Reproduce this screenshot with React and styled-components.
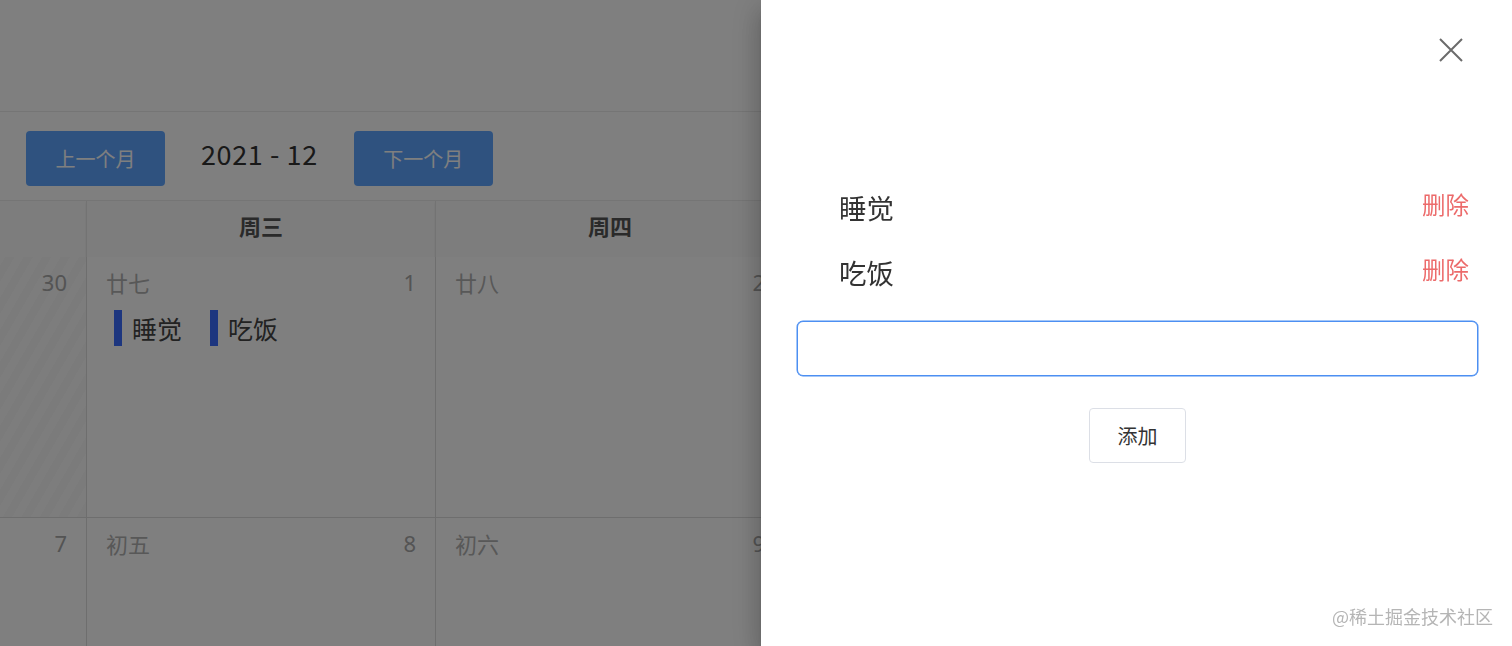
import React, { useState } from "react";
import styled, { createGlobalStyle } from "styled-components";

const GlobalStyle = createGlobalStyle`
  html, body {
    margin: 0;
    padding: 0;
    overflow: hidden;
    background: #ffffff;
    font-family: "Noto Sans CJK SC", "Noto Sans", sans-serif;
  }
  * { box-sizing: border-box; }
`;

const weekDays = ["周二", "周三", "周四"];
const rows = [
  [
    { day: 30, lunar: "廿六", other: true },
    { day: 1, lunar: "廿七", events: ["睡觉", "吃饭"] },
    { day: 2, lunar: "廿八" },
  ],
  [
    { day: 7, lunar: "初四" },
    { day: 8, lunar: "初五" },
    { day: 9, lunar: "初六" },
  ],
];

export default function App() {
  const [todos, setTodos] = useState(["睡觉", "吃饭"]);
  const [text, setText] = useState("");

  function addTodo() {
    if (!text.trim()) return;
    setTodos([...todos, text.trim()]);
    setText("");
  }

  return (
    <>
      <GlobalStyle />
      <Page>
        <TopBar />
        <Toolbar>
          <MonthButton>上一个月</MonthButton>
          <MonthLabel>2021 - 12</MonthLabel>
          <MonthButton>下一个月</MonthButton>
        </Toolbar>
        <Grid>
          {weekDays.map((w, i) => (
            <HeadCell key={w} first={i === 0}>
              {i === 0 ? "" : w}
            </HeadCell>
          ))}
          {rows.map((row, r) =>
            row.map((cell, i) => (
              <DayCell key={r + "-" + i} other={cell.other}>
                <DayTop>
                  {i === 0 ? <span /> : <Lunar>{cell.lunar}</Lunar>}
                  <DayNum>{cell.day}</DayNum>
                </DayTop>
                {i > 0 && cell.events && (
                  <Events>
                    {cell.events.map((e) => (
                      <Event key={e}>{e}</Event>
                    ))}
                  </Events>
                )}
              </DayCell>
            ))
          )}
        </Grid>
      </Page>

      <Mask />
      <Drawer>
        <DrawerHead>
          <CloseButton aria-label="close">
            <svg width="24" height="24" viewBox="0 0 24 24">
              <path d="M1 1 L23 23 M23 1 L1 23" stroke="#6b6b6b" strokeWidth="2" fill="none" />
            </svg>
          </CloseButton>
        </DrawerHead>
        <TodoList>
          {todos.map((t, i) => (
            <TodoItem key={i}>
              <TodoText>{t}</TodoText>
              <DeleteLink onClick={() => setTodos(todos.filter((_, j) => j !== i))}>删除</DeleteLink>
            </TodoItem>
          ))}
        </TodoList>
        <TodoInput value={text} onChange={(e) => setText(e.target.value)} />
        <AddRow>
          <AddButton onClick={addTodo}>添加</AddButton>
        </AddRow>
      </Drawer>
      <Watermark>@稀土掘金技术社区</Watermark>
    </>
  );
}

const Page = styled.div`
  width: 1512px;
  height: 646px;
  overflow: hidden;
  background: #ffffff;
`;

const TopBar = styled.div`
  height: 112px;
  border-bottom: 1px solid #ebebeb;
`;

const Toolbar = styled.div`
  height: 89px;
  display: flex;
  align-items: center;
  gap: 36px;
  padding: 5px 0 0 26px;
  border-bottom: 1px solid #ebebeb;
`;

const MonthButton = styled.button`
  width: 139px;
  height: 55px;
  border: none;
  border-radius: 4px;
  background: #5ea4ff;
  color: #ffffff;
  font-family: "Noto Sans CJK SC", sans-serif;
  font-size: 20px;
  padding-top: 1px;
`;

const MonthLabel = styled.div`
  font-family: "Noto Sans CJK SC", sans-serif;
  font-size: 27px;
  color: #333333;
  letter-spacing: 0.6px;
  margin-bottom: 10px;
`;

const Grid = styled.div`
  display: grid;
  grid-template-columns: 86px 349px 349px;
  grid-template-rows: 56px 261px 261px;
  width: 784px;
`;

const HeadCell = styled.div`
  display: flex;
  align-items: center;
  justify-content: center;
  padding-bottom: 9px;
  font-size: 22px;
  font-weight: 700;
  color: #555555;
  background: #fbfbfb;
  border-left: ${(p) => (p.first ? "none" : "1px solid #e6e6e6")};
  box-shadow: 0 2px 2px rgba(0, 0, 0, 0.08);
`;

const DayCell = styled.div`
  padding: 10px 19px 0 19px;
  border-left: 1px solid #dddddd;
  border-bottom: 1px solid #dddddd;
  &:nth-child(3n + 1) {
    border-left: none;
  }
  background: ${(p) =>
    p.other
      ? "repeating-linear-gradient(-60deg, #f6f6f6 0 8px, #fbfbfb 8px 16px)"
      : "#ffffff"};
`;

const DayTop = styled.div`
  display: flex;
  justify-content: space-between;
  align-items: center;
  height: 30px;
`;

const Lunar = styled.span`
  font-size: 22px;
  color: #b0b0b0;
`;

const DayNum = styled.span`
  font-size: 22px;
  color: #a8a8a8;
  font-family: "Noto Sans", sans-serif;
`;

const Events = styled.div`
  display: flex;
  gap: 28px;
  margin-top: 13px;
  padding-left: 8px;
`;

const Event = styled.div`
  height: 36px;
  display: flex;
  align-items: center;
  border-left: 8px solid #3a6cff;
  padding-left: 10px;
  font-size: 25px;
  color: #444444;
`;

const Mask = styled.div`
  position: fixed;
  inset: 0;
  background: rgba(0, 0, 0, 0.5);
`;

const Drawer = styled.aside`
  position: fixed;
  top: 0;
  right: 0;
  bottom: 0;
  width: 751px;
  background: #ffffff;
  padding: 0 34px 0 36px;
  display: flex;
  flex-direction: column;
  box-shadow: 0 8px 10px -5px rgba(0, 0, 0, 0.2), 0 16px 24px 2px rgba(0, 0, 0, 0.14),
    0 6px 30px 5px rgba(0, 0, 0, 0.12);
`;

const DrawerHead = styled.div`
  height: 176px;
  display: flex;
  justify-content: flex-end;
  padding-top: 38px;
  padding-right: 15px;
`;

const CloseButton = styled.button`
  width: 24px;
  height: 24px;
  padding: 0;
  border: none;
  background: none;
  cursor: pointer;
  svg {
    display: block;
  }
`;

const TodoList = styled.ul`
  list-style: none;
  margin: 0;
  padding: 0;
`;

const TodoItem = styled.li`
  height: 65px;
  display: flex;
  align-items: center;
  justify-content: space-between;
  padding: 0 9px 0 42px;
  line-height: 1.2;
`;

const TodoText = styled.span`
  font-size: 27.5px;
  color: #333333;
  margin-top: -3px;
`;

const DeleteLink = styled.span`
  font-size: 23.5px;
  color: #ec6b6b;
  cursor: pointer;
  margin-top: -9px;
`;

const TodoInput = styled.input`
  margin-top: 15px;
  height: 55px;
  width: 100%;
  border: 1px solid #4c8ff2;
  box-shadow: 0 0 0 0.5px #4c8ff2;
  border-radius: 6px;
  outline: none;
  padding: 0 15px;
  font-size: 20px;
  font-family: "Noto Sans CJK SC", sans-serif;
`;

const AddRow = styled.div`
  display: flex;
  justify-content: center;
  margin-top: 32px;
`;

const AddButton = styled.button`
  width: 97px;
  height: 55px;
  background: #ffffff;
  border: 1px solid #dcdfe6;
  border-radius: 4px;
  font-size: 20px;
  color: #333333;
  font-family: "Noto Sans CJK SC", sans-serif;
  cursor: pointer;
`;

const Watermark = styled.div`
  position: fixed;
  right: 19px;
  bottom: 17px;
  font-size: 18px;
  color: #b5b5b5;
  font-family: "Noto Sans CJK SC", sans-serif;
`;
